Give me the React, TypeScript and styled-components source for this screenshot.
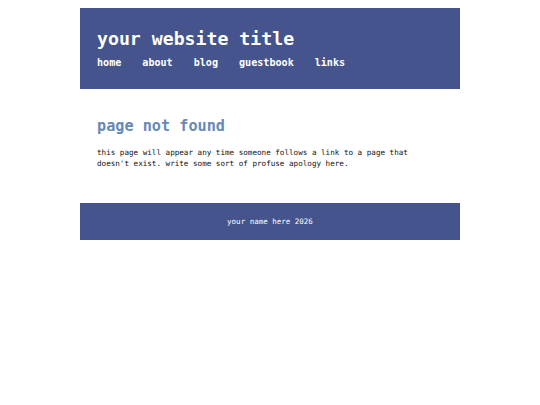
import * as React from "react";
import styled, { createGlobalStyle } from "styled-components";

const header_color = "#45548c";
const heading_color = "#6889b6";
const mono = `"DejaVu Sans Mono", "Liberation Mono", monospace`;

const GlobalStyle = createGlobalStyle`
  body {
    margin: 8px 0;
    background: #ffffff;
    font-family: ${mono};
  }
`;

const Page = styled.div`
  width: 380px;
  margin: 0 auto;
`;

const Header = styled.header`
  height: 81px;
  box-sizing: border-box;
  padding: 19px 17px 0;
  background-color: ${header_color};
  color: #ffffff;
`;

const Title = styled.h1`
  margin: 0;
  font-size: 18.2px;
  line-height: 24px;
  font-weight: bold;
`;

const Nav = styled.nav`
  display: flex;
  gap: 21px;
  margin-top: 5px;
`;

const NavLink = styled.a`
  color: #ffffff;
  text-decoration: none;
  font-size: 10.1px;
  font-weight: bold;
  line-height: 14px;
`;

const Main = styled.main`
  padding: 26px 17px 33px;
`;

const Heading = styled.h2`
  margin: 0 0 10px;
  color: ${heading_color};
  font-size: 15.2px;
  line-height: 22px;
  font-weight: bold;
`;

const Text = styled.p`
  margin: 0;
  color: #111111;
  font-size: 7.6px;
  line-height: 11.3px;
`;

const Footer = styled.footer`
  height: 37px;
  display: flex;
  align-items: center;
  justify-content: center;
  background-color: ${header_color};
  color: #ffffff;
  font-size: 7.5px;
`;

const links = ["home", "about", "blog", "guestbook", "links"];

const App = () => {
  return (
    <Page>
      <GlobalStyle />
      <Header>
        <Title>your website title</Title>
        <Nav>
          {links.map((link) => (
            <NavLink key={link} href="#">
              {link}
            </NavLink>
          ))}
        </Nav>
      </Header>
      <Main>
        <Heading>page not found</Heading>
        <Text>
          this page will appear any time someone follows a link to a page that
          <br />
          doesn't exist. write some sort of profuse apology here.
        </Text>
      </Main>
      <Footer>your name here 2026</Footer>
    </Page>
  );
};

export default App;
